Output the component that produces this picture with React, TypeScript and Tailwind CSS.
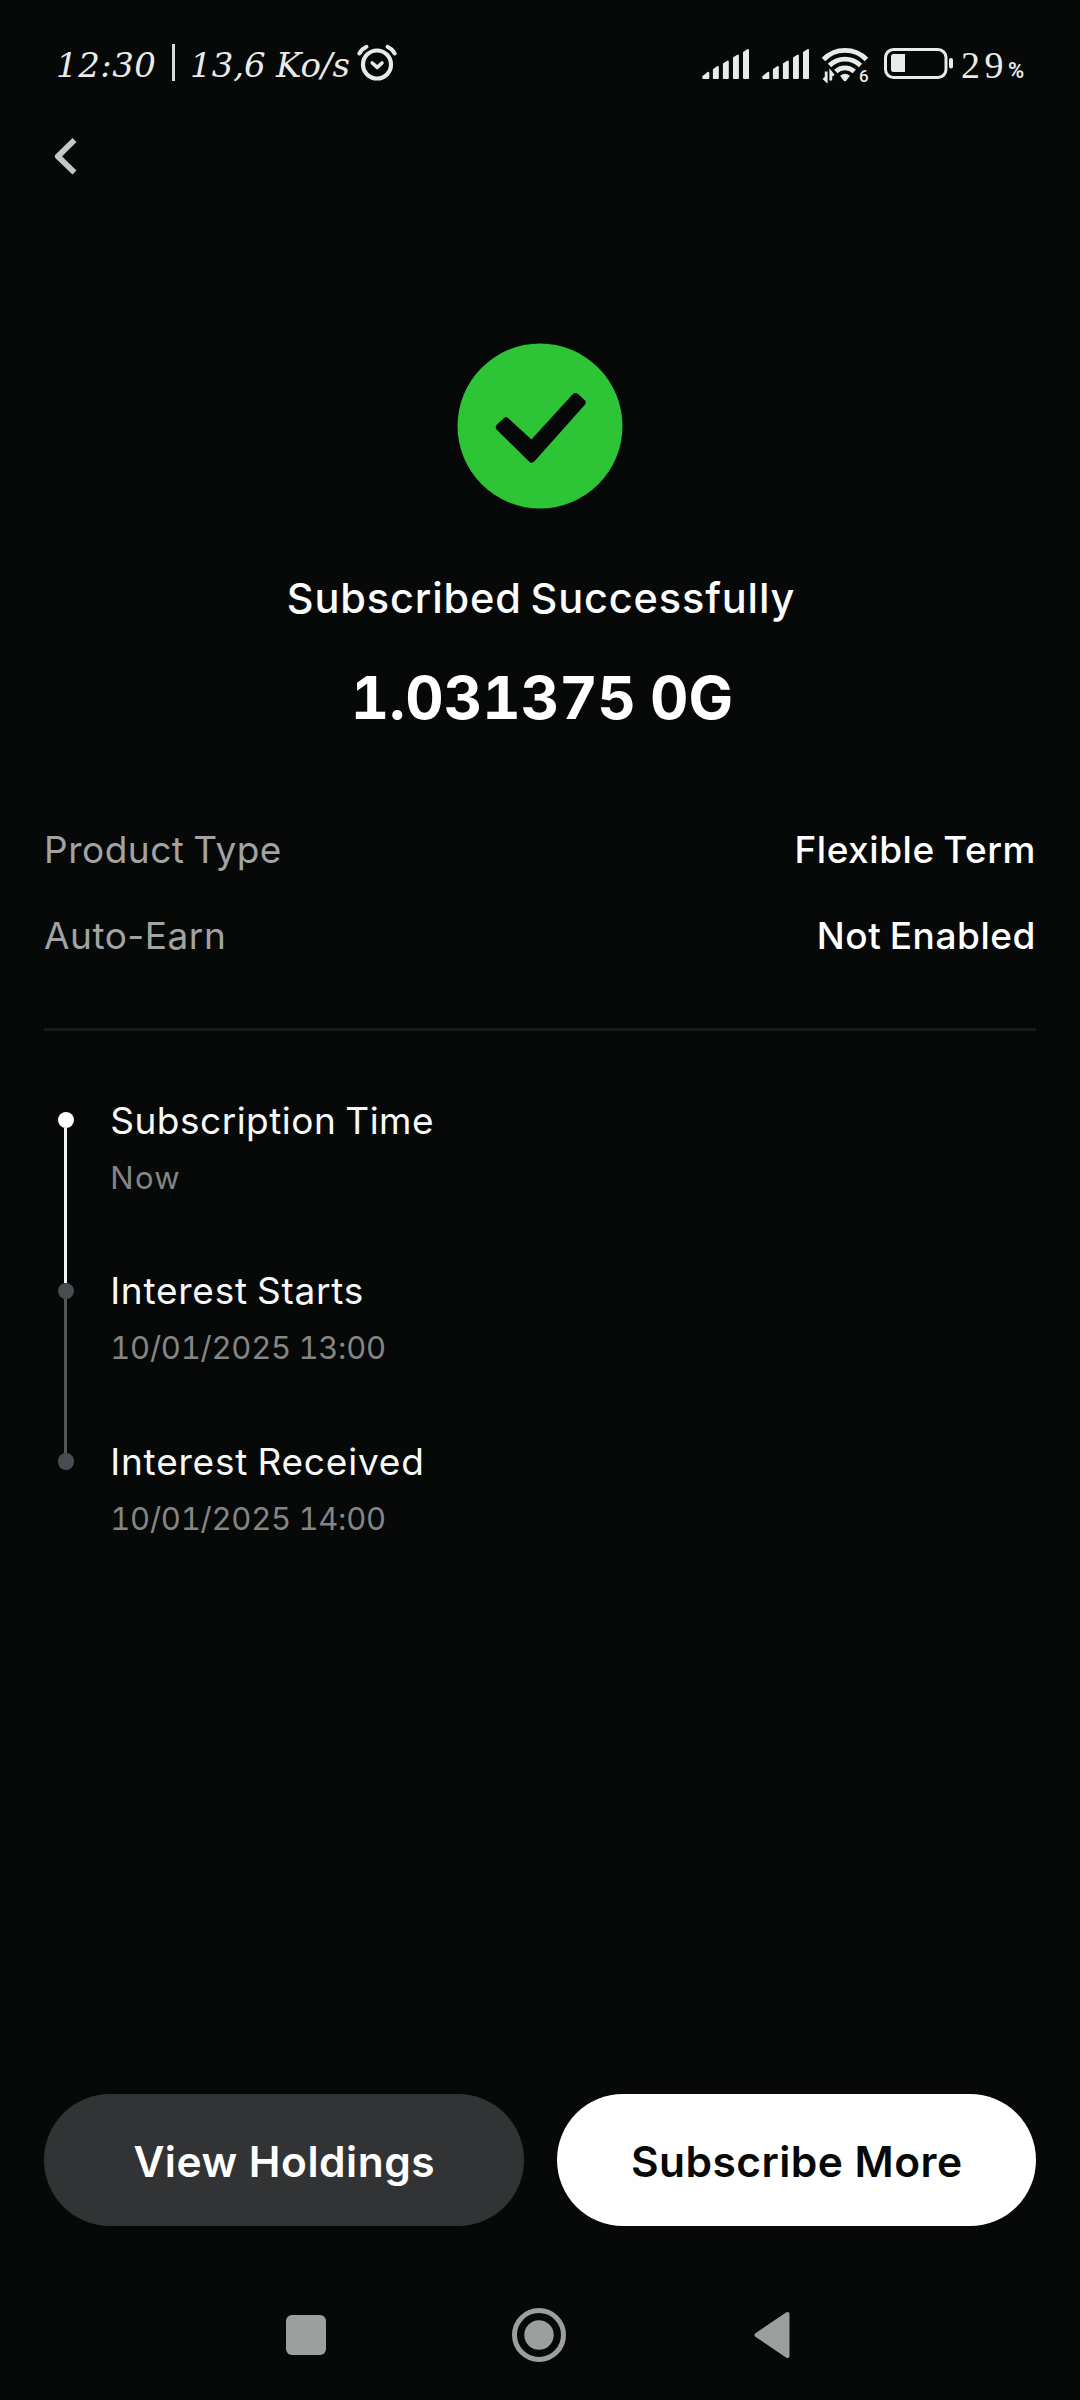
import type { ReactNode } from 'react';

function AlarmIcon() {
  return (
    <svg width="42" height="40" viewBox="0 0 42 40" fill="none" stroke="#e9ebea" strokeLinecap="round">
      <circle cx="21" cy="21.5" r="14" strokeWidth="4.2" />
      <path d="M16.300 20l4.900 4.300 4.800-4.300" strokeWidth="3.600" strokeLinejoin="round" />
      <path d="M3.300 10.500q2.500-4.500 7.200-6.700M38.700 10.500q-2.500-4.500-7.200-6.700" strokeWidth="4" />
    </svg>
  );
}

function SignalIcon() {
  return (
    <svg width="48" height="32" viewBox="0 0 48 32" fill="#e9ebea">
      <path d="M0.300 28.200l5-4q2-1.200 2 .8v5q0 1-1 1h-5q-1 0-1-1z" />
      <path d="M10.900 21.300l3.900-2.800q2-1.100 2 .8V30q0 1-1 1h-3.900q-1 0-1-1z" />
      <path d="M20.900 15.400l3.900-2.500q2-1.100 2 .8V30q0 1-1 1h-3.900q-1 0-1-1z" />
      <path d="M31 9.400l3.900-2.400q2-1.100 2 .8V30q0 1-1 1H32q-1 0-1-1z" />
      <path d="M41 3.900l4-2.500q2-1.100 2 .8V30q0 1-1 1h-4q-1 0-1-1z" />
    </svg>
  );
}

function WifiIcon() {
  return (
    <svg width="50" height="40" viewBox="0 0 50 40" fill="none" stroke="#e9ebea">
      <path d="M2.500 15.500a30 30 0 0 1 43 0" strokeWidth="4.800" />
      <path d="M8.500 21.500a22 22 0 0 1 31 0" strokeWidth="4.800" />
      <path d="M14.800 27.500a13.500 13.500 0 0 1 18.400 0" strokeWidth="4.800" />
      <path d="M19.100 31.700q5-3.800 9.800 0l-3.700 5q-1.200 1.300-2.400 0z" fill="#e9ebea" stroke="none" />
      <path d="M5.200 27.500v9L2.500 34M9.800 36.500v-8.300l2.800 3.500" strokeWidth="2.800" />
    </svg>
  );
}

function BatteryIcon() {
  return (
    <svg width="70" height="32" viewBox="0 0 70 32" fill="none">
      <rect x="1.500" y="1.500" width="60.500" height="28" rx="8" stroke="#e9ebea" strokeWidth="3" />
      <path d="M9.500 6H21v18H9.500Q7 24 7 21.500v-13Q7 6 9.500 6z" fill="#e9ebea" />
      <rect x="65" y="10" width="4" height="10.500" rx="2" fill="#e9ebea" />
    </svg>
  );
}

function StatusBar() {
  return (
    <header className="flex h-[126px] items-start justify-between pt-[42px] text-[#e9ebea]">
      <div className="flex items-start pl-[56px] font-['DejaVu_Serif',serif] text-[34px] leading-[46px] italic">
        <span className="w-[116px] tracking-[0.5px]">12:30</span>
        <span className="mt-[2px] h-[37px] w-[3px] bg-[#d9dbda]" />
        <span className="ml-[15px] w-[86px]">13,6</span>
        <span>Ko/s</span>
      </div>
      <div className="mr-[53px] flex items-start">
        <div className="flex items-start gap-[12px] pt-[6px]">
          <SignalIcon />
          <SignalIcon />
        </div>
        <div className="relative ml-[11px] pt-[2px]">
          <WifiIcon />
          <span className="absolute top-[24px] left-[38px] font-['Roboto',sans-serif] text-[17px] leading-[20px] font-medium">
            6
          </span>
        </div>
        <div className="ml-[13px] pt-[6px]">
          <BatteryIcon />
        </div>
        <div className="ml-[7px] flex items-baseline font-['Liberation_Serif',serif] text-[38px] leading-[47px]">
          <span className="tracking-[4.500px]">29</span>
          <span className="w-[19px] font-['Roboto',sans-serif] text-[22px] font-semibold">%</span>
        </div>
      </div>
    </header>
  );
}

function DetailRow({ label, value }: { label: string; value: ReactNode }) {
  return (
    <div className="flex h-[44px] items-center justify-between leading-[44px] [word-spacing:-2px]">
      <dt className="tracking-[0.5px] text-[#a2a3a3]">{label}</dt>
      <dd className="font-medium tracking-[0.550px] text-white">{value}</dd>
    </div>
  );
}

const steps = [
  { title: 'Subscription Time', detail: 'Now', titleSpacing: 'tracking-[0.5px]', detailSpacing: 'tracking-[1.4px]' },
  { title: 'Interest Starts', detail: '10/01/2025 13:00', titleSpacing: 'tracking-[0.75px]', detailSpacing: 'tracking-[-0.25px]' },
  { title: 'Interest Received', detail: '10/01/2025 14:00', titleSpacing: 'tracking-[0.8px]', detailSpacing: 'tracking-[-0.25px]' },
];

function Timeline() {
  return (
    <section className="flex pt-[67.6px] pl-[13.7px]">
      <div className="flex w-[16.500px] flex-col items-center pt-[13.400px]">
        <span className="size-[16.500px] shrink-0 rounded-full bg-white" />
        <span className="h-[154.100px] w-[3px] shrink-0 bg-[#f2f3f3]" />
        <span className="size-[16.500px] shrink-0 rounded-full bg-[#4b4c52]" />
        <span className="h-[154.100px] w-[3px] shrink-0 bg-[#56575b]" />
        <span className="size-[16.500px] shrink-0 rounded-full bg-[#4b4c52]" />
      </div>
      <ol className="ml-[36px]">
        {steps.map((step) => (
          <li key={step.title} className="h-[170.600px]">
            <h3 className={`text-[37px] leading-[44px] text-[#f7f8f8] [word-spacing:-2px] ${step.titleSpacing}`}>
              {step.title}
            </h3>
            <p
              className={`mt-[16px] text-[31px] leading-[38px] text-[#848585] tabular-nums [word-spacing:-0.5px] ${step.detailSpacing}`}
            >
              {step.detail}
            </p>
          </li>
        ))}
      </ol>
    </section>
  );
}

export default function App() {
  return (
    <div className="flex h-[2400px] w-[1080px] flex-col overflow-hidden bg-[#070908] font-['Inter',sans-serif]">
      <div className="relative">
        <StatusBar />
        <div className="absolute top-[43px] left-[356px]">
          <AlarmIcon />
        </div>
      </div>

      <nav className="h-[60px] pt-[9px] pl-[53px]">
        <svg width="26" height="42" viewBox="0 0 26 42" fill="none" stroke="#c6c7c8" strokeWidth="5.800" strokeLinejoin="round">
          <path d="M21.500 5L4.800 21.300l16.700 16.200" />
        </svg>
      </nav>

      <main className="flex flex-1 flex-col px-[44px]">
        <div className="flex flex-col items-center pt-[157px]">
          <svg width="166" height="166" viewBox="0 0 166 166">
            <circle cx="83" cy="83" r="82.500" fill="#2dc435" />
            <path
              d="M42.700 84.300L74.700 115.700L124.800 59.500L118.500 53.900L74.700 101.900L49 78.200z"
              fill="#070908"
              stroke="#070908"
              strokeWidth="7.600"
              strokeLinejoin="round"
            />
          </svg>
          <h1 className="mt-[65px] pl-[2px] text-[41.5px] leading-[48px] font-medium tracking-[0.840px] text-[#fbfcfc] [word-spacing:-3px]">
            Subscribed Successfully
          </h1>
          <p className="mt-[40px] pl-[4px] text-[59.5px] leading-[70px] font-[650] tracking-[0px] text-white tabular-nums [word-spacing:-2px]">
            1.031375 0G
          </p>
        </div>

        <dl className="flex flex-col gap-[42px] pt-[96px] text-[37px]">
          <DetailRow label="Product Type" value="Flexible Term" />
          <DetailRow label="Auto-Earn" value="Not Enabled" />
        </dl>

        <hr className="mt-[70px] h-[3px] border-0 bg-[#191b1b]" />

        <Timeline />

        <div className="mt-auto mb-[45px] grid h-[132px] grid-cols-2 gap-[33px] text-[42.5px] font-semibold [word-spacing:-3px]">
          <button className="rounded-full bg-[#323335] pt-[4px] pl-[1px] tracking-[0.500px] text-white">
            View Holdings
          </button>
          <button className="rounded-full bg-white pt-[4px] pl-[1px] tracking-[0.450px] text-[#070908]">
            Subscribe More
          </button>
        </div>
      </main>

      <footer className="flex h-[129px] items-start justify-between pt-[35px] pr-[289px] pl-[286px]">
        <div className="mt-[9px] size-[40px] rounded-[6px] bg-[#9d9e9e]" />
        <svg width="54" height="58" viewBox="0 0 54 58" fill="none">
          <circle cx="27" cy="29" r="24.500" stroke="#9d9e9e" strokeWidth="5" />
          <circle cx="27" cy="29" r="14.700" fill="#9d9e9e" />
        </svg>
        <svg width="39" height="58" viewBox="0 0 39 58">
          <path d="M4.500 29L35.500 8v42z" fill="#9d9e9e" stroke="#9d9e9e" strokeWidth="4" strokeLinejoin="round" />
        </svg>
      </footer>
    </div>
  );
}
